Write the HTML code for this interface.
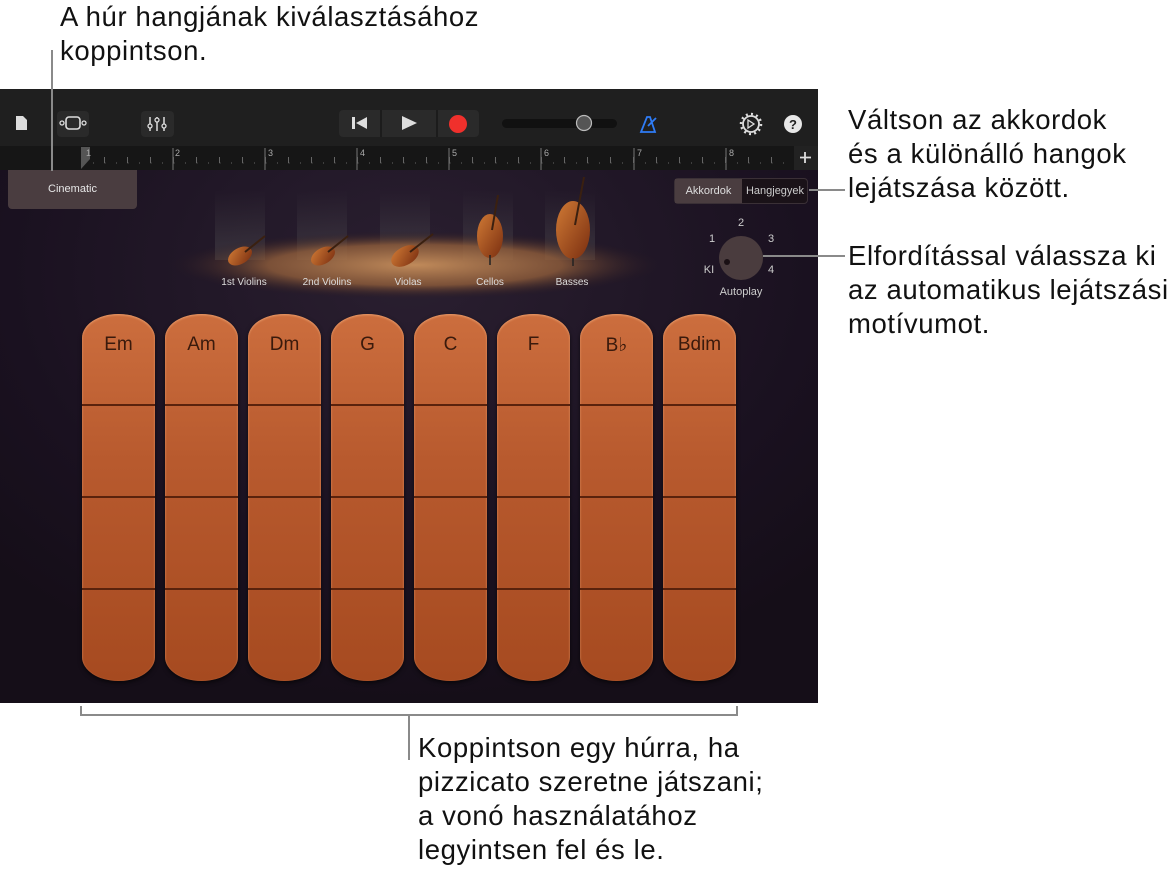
<!DOCTYPE html>
<html><head><meta charset="utf-8"><style>
*{margin:0;padding:0;box-sizing:border-box}
body{width:1173px;height:878px;background:#fff;position:relative;overflow:hidden;font-family:"Liberation Sans",sans-serif}
.ann{position:absolute;font-size:27.5px;letter-spacing:0.6px;line-height:34px;color:#111;white-space:nowrap}
.ln{position:absolute;background:#8a8a8a}
.app{position:absolute;left:0;top:89px;width:818px;height:614px;background:radial-gradient(ellipse 70% 70% at 50% 30%,#2a1f30,#1a1120 70%,#150e18);overflow:hidden}
.tb{position:absolute;left:0;top:0;width:818px;height:57px;background:#1f1f1f}
.ru{position:absolute;left:0;top:57px;width:818px;height:24px;background:#161616}
.strip{position:absolute;top:225px;width:73px;height:367px;border-radius:36px/24px;background:linear-gradient(#cc6e3e,#b85a2e 40%,#a64a20);box-shadow:inset 0 1px 2px rgba(255,190,140,.6),0 2px 4px rgba(0,0,0,.6)}
.strip i{position:absolute;left:0;width:100%;height:2px;background:#5a220c}
.strip b{position:absolute;top:20px;width:100%;text-align:center;font-weight:normal;font-size:19px;color:#3a1a0c}
.lab{position:absolute;font-size:10px;color:#ddd;transform:translateX(-50%)}
.kn{position:absolute;font-size:11px;color:#ccc;transform:translateX(-50%)}
</style></head><body>

<div class="ann" style="left:60px;top:0px">A húr hangjának kiválasztásához<br>koppintson.</div>
<div class="ann" style="left:848px;top:103px">Váltson az akkordok<br>és a különálló hangok<br>lejátszása között.</div>
<div class="ann" style="left:848px;top:239px">Elfordítással válassza ki<br>az automatikus lejátszási<br>motívumot.</div>
<div class="ann" style="left:418px;top:731px">Koppintson egy húrra, ha<br>pizzicato szeretne játszani;<br>a vonó használatához<br>legyintsen fel és le.</div>

<div class="app">
 <div class="tb"></div>
 <div class="ru"></div>
 <svg style="position:absolute;left:0;top:0" width="818" height="81">
  <path d="M16 27h7l4 4v10h-11z" fill="#ddd"/>
  <rect x="57" y="22" width="32" height="26" rx="4" fill="#2a2a2a"/>
  <rect x="66" y="28" width="14" height="12" rx="3" fill="none" stroke="#ddd" stroke-width="1.6"/>
  <circle cx="62" cy="34" r="2" fill="none" stroke="#ddd" stroke-width="1.3"/><circle cx="84" cy="34" r="2" fill="none" stroke="#ddd" stroke-width="1.3"/>
  <rect x="141" y="22" width="33" height="26" rx="4" fill="#2a2a2a"/>
  <g stroke="#ddd" stroke-width="1.5"><path d="M150 28v14M157 28v14M164 28v14"/></g>
  <g fill="#2a2a2a" stroke="#ddd" stroke-width="1.3"><circle cx="150" cy="37" r="2"/><circle cx="157" cy="31" r="2"/><circle cx="164" cy="37" r="2"/></g>
  <rect x="339" y="21" width="140" height="27" rx="4" fill="#2a2a2a"/>
  <path d="M381 21v27M437 21v27" stroke="#1c1c1c" stroke-width="2"/>
  <path d="M352 28v12h3V28z M356 34l11-6v12z" fill="#ddd"/>
  <path d="M402 27l15 7-15 7z" fill="#ddd"/>
  <circle cx="458" cy="35" r="9" fill="#f0302c"/>
  <rect x="502" y="30" width="115" height="9" rx="4.5" fill="#111"/>
  <circle cx="584" cy="34" r="7.5" fill="#555" stroke="#bbb" stroke-width="1.2"/>
  <path d="M641 43l6-15h3l5 15zM648 37l8-8" fill="none" stroke="#2f7cf6" stroke-width="1.8"/>
  <circle cx="751" cy="35" r="8" fill="none" stroke="#ddd" stroke-width="1.8"/>
  <circle cx="751" cy="35" r="10" fill="none" stroke="#ddd" stroke-width="2.5" stroke-dasharray="2 3.2"/>
  <path d="M748 31l6 4-6 4z" fill="none" stroke="#ddd" stroke-width="1.3"/>
  <circle cx="793" cy="35" r="9" fill="#e8e8e8"/>
  <text x="793" y="40" font-size="13" font-weight="bold" text-anchor="middle" fill="#222">?</text>
  <path d="M81 58h9v12l-9 10z" fill="#555"/>
  <g font-size="9" fill="#aaa"><text x="86" y="67">1</text><text x="175" y="67">2</text><text x="268" y="67">3</text><text x="360" y="67">4</text><text x="452" y="67">5</text><text x="544" y="67">6</text><text x="637" y="67">7</text><text x="729" y="67">8</text></g>
  <g stroke="#777" stroke-width="1">
   <path d="M173 59v22M265 59v22M357 59v22M449 59v22M541 59v22M634 59v22M726 59v22"/>
  </g>
  <g stroke="#666" stroke-width="1" stroke-dasharray="1 10.5"><path d="M93 74h700"/></g>
  <g stroke="#666" stroke-width="1" stroke-dasharray="1 22"><path d="M104 71h700" stroke-width="6"/></g>
  <rect x="794" y="57" width="24" height="24" fill="#222"/>
  <path d="M805 63v11M800 68.5h11" stroke="#ddd" stroke-width="1.8"/>
 </svg>
 <div style="position:absolute;left:8px;top:81px;width:129px;height:39px;background:#4a3d40;border-radius:0 0 4px 4px;color:#e6e6e6;font-size:11px;text-align:center;line-height:39px">Cinematic</div>

 <svg style="position:absolute;left:0;top:81px" width="818" height="130">
  <defs>
   <radialGradient id="fl" cx="50%" cy="50%" r="50%"><stop offset="0" stop-color="#c08a5a"/><stop offset=".6" stop-color="#8a5a3a" stop-opacity=".85"/><stop offset="1" stop-color="#2a1a20" stop-opacity="0"/></radialGradient>
   <linearGradient id="sp" x1="0" y1="0" x2="0" y2="1"><stop offset="0" stop-color="#555" stop-opacity="0"/><stop offset="1" stop-color="#666" stop-opacity=".35"/></linearGradient>
   <linearGradient id="wd" x1="0" y1="0" x2="1" y2="1"><stop offset="0" stop-color="#d07a35"/><stop offset="1" stop-color="#7a2e10"/></linearGradient>
  </defs>
  <g fill="url(#sp)"><rect x="215" y="20" width="50" height="70"/><rect x="297" y="20" width="50" height="70"/><rect x="380" y="20" width="50" height="70"/><rect x="463" y="20" width="50" height="70"/><rect x="545" y="20" width="50" height="70"/></g>
  <ellipse cx="415" cy="95" rx="245" ry="34" fill="url(#fl)"/>
  <g fill="url(#wd)">
   <ellipse cx="240" cy="86" rx="13" ry="8" transform="rotate(-30 240 86)"/>
   <ellipse cx="323" cy="86" rx="13" ry="8" transform="rotate(-30 323 86)"/>
   <ellipse cx="405" cy="86" rx="15" ry="9" transform="rotate(-30 405 86)"/>
   <ellipse cx="490" cy="66" rx="13" ry="22"/>
   <ellipse cx="573" cy="60" rx="17" ry="29"/>
  </g>
  <g stroke="#3a2010" stroke-width="2"><path d="M245 82l20-16M328 82l20-16M410 82l23-18M492 60l6-35M575 55l9-48"/></g>
  <path d="M490 85v10M573 88v8" stroke="#222" stroke-width="1.5"/>
 </svg>
 <div class="lab" style="left:244px;top:188px">1st Violins</div>
 <div class="lab" style="left:327px;top:188px">2nd Violins</div>
 <div class="lab" style="left:408px;top:188px">Violas</div>
 <div class="lab" style="left:490px;top:188px">Cellos</div>
 <div class="lab" style="left:572px;top:188px">Basses</div>

 <div style="position:absolute;left:674px;top:89px;width:134px;height:26px;border:1px solid #3a3036;border-radius:4px;background:#1a1218;font-size:11px;color:#ddd">
  <div style="position:absolute;left:0;top:0;width:67px;height:24px;background:#4a3d40;line-height:24px;text-align:center">Akkordok</div>
  <div style="position:absolute;left:67px;top:0;width:66px;height:24px;line-height:24px;text-align:center;color:#ccc">Hangjegyek</div>
 </div>
 <div style="position:absolute;left:719px;top:147px;width:44px;height:44px;border-radius:50%;background:#4a3c3e"></div>
 <div style="position:absolute;left:724px;top:170px;width:6px;height:6px;border-radius:50%;background:#1a1014"></div>
 <div class="kn" style="left:741px;top:128px">2</div>
 <div class="kn" style="left:712px;top:144px">1</div>
 <div class="kn" style="left:771px;top:144px">3</div>
 <div class="kn" style="left:709px;top:175px">KI</div>
 <div class="kn" style="left:771px;top:175px">4</div>
 <div class="kn" style="left:741px;top:197px">Autoplay</div>

 <div class="strip" style="left:82px"><b>Em</b><i style="top:90px"></i><i style="top:182px"></i><i style="top:274px"></i></div>
 <div class="strip" style="left:165px"><b>Am</b><i style="top:90px"></i><i style="top:182px"></i><i style="top:274px"></i></div>
 <div class="strip" style="left:248px"><b>Dm</b><i style="top:90px"></i><i style="top:182px"></i><i style="top:274px"></i></div>
 <div class="strip" style="left:331px"><b>G</b><i style="top:90px"></i><i style="top:182px"></i><i style="top:274px"></i></div>
 <div class="strip" style="left:414px"><b>C</b><i style="top:90px"></i><i style="top:182px"></i><i style="top:274px"></i></div>
 <div class="strip" style="left:497px"><b>F</b><i style="top:90px"></i><i style="top:182px"></i><i style="top:274px"></i></div>
 <div class="strip" style="left:580px"><b>B♭</b><i style="top:90px"></i><i style="top:182px"></i><i style="top:274px"></i></div>
 <div class="strip" style="left:663px"><b>Bdim</b><i style="top:90px"></i><i style="top:182px"></i><i style="top:274px"></i></div>
</div>

<div class="ln" style="left:51px;top:50px;width:2px;height:121px"></div>
<div class="ln" style="left:809px;top:189px;width:36px;height:2px"></div>
<div class="ln" style="left:763px;top:255px;width:82px;height:2px"></div>
<div class="ln" style="left:80px;top:714px;width:658px;height:2px"></div>
<div class="ln" style="left:80px;top:706px;width:2px;height:10px"></div>
<div class="ln" style="left:736px;top:706px;width:2px;height:10px"></div>
<div class="ln" style="left:408px;top:714px;width:2px;height:46px"></div>
</body></html>
